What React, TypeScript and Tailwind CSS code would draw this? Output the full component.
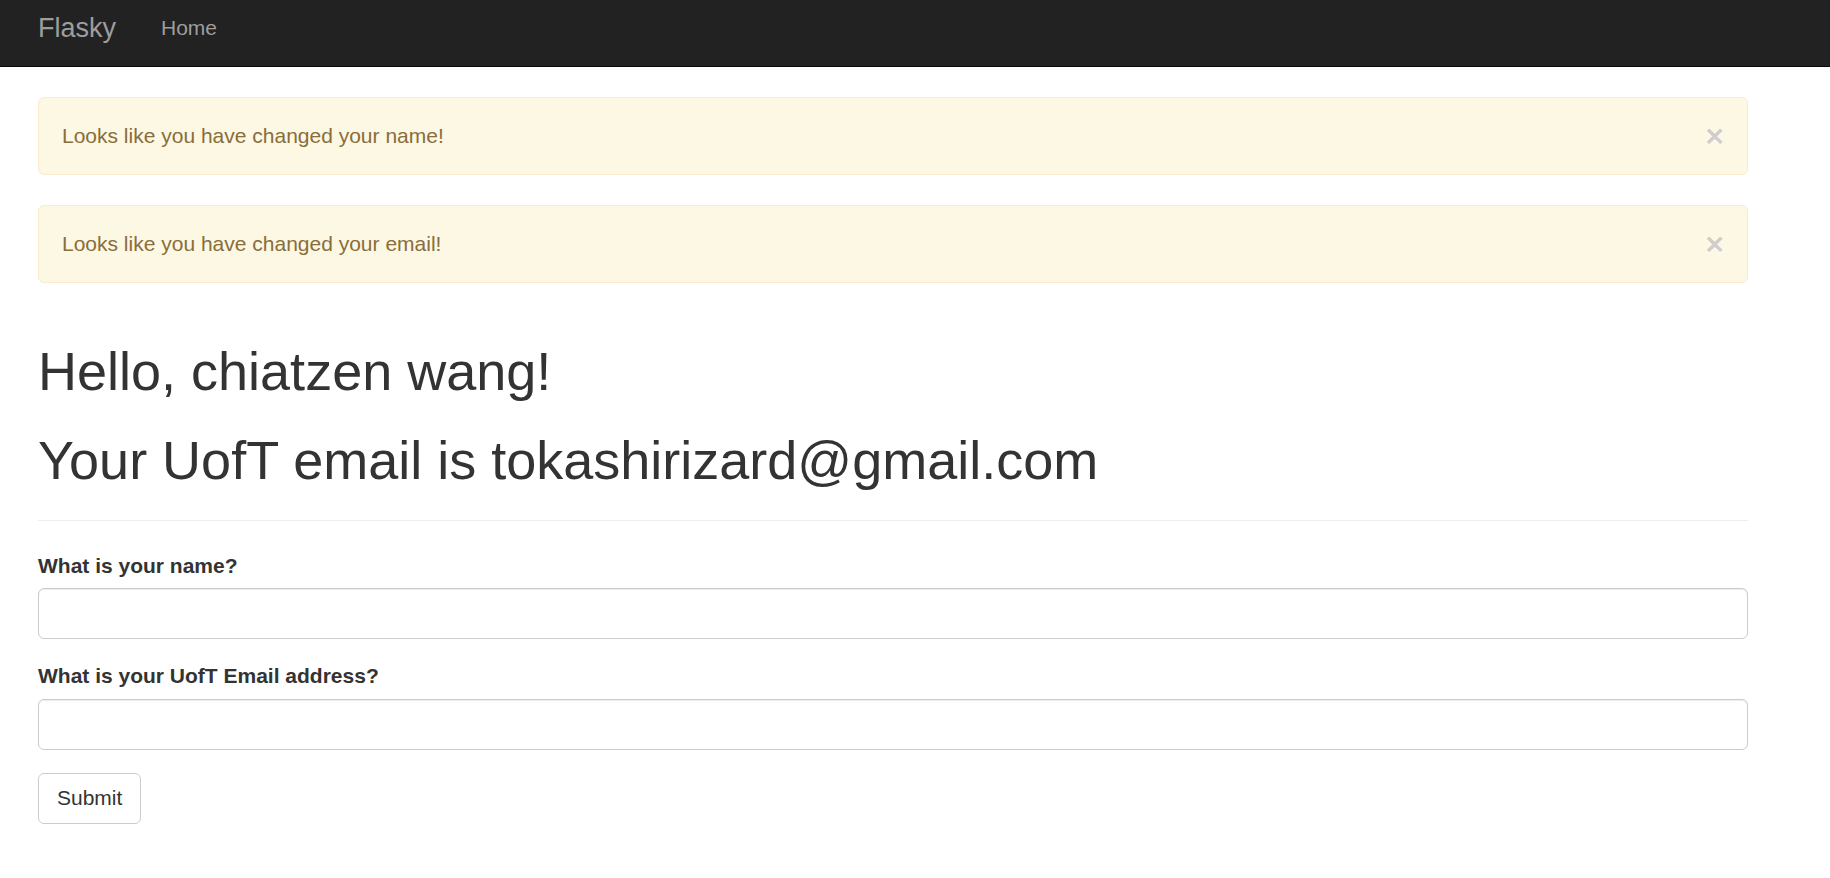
import React from "react";

function Alert({ text }: { text: string }) {
  return (
    <div className="flex items-center justify-between h-[78px] pl-[23px] pr-[23px] bg-[#fcf8e3] border border-[#faebcc] rounded-[6px] text-[#8a6d3b] text-[21px] leading-[30px]">
      <span>{text}</span>
      <button
        type="button"
        className="text-[32px] leading-none font-bold text-black/20 [text-shadow:0_1px_0_#fff]"
      >
        ×
      </button>
    </div>
  );
}

export default function App() {
  return (
    <div
      className="min-h-screen bg-white text-[#333] text-[21px] leading-[30px]"
      style={{ fontFamily: '"Liberation Sans", Arial, Helvetica, sans-serif' }}
    >
      <nav className="h-[67px] bg-[#222] border-b border-[#080808]">
        <div className="flex pl-[38px] pt-[13px]">
          <a className="text-[27px] leading-[30px] text-[#9d9d9d]">Flasky</a>
          <a className="ml-[45px] text-[21px] leading-[30px] text-[#9d9d9d]">Home</a>
        </div>
      </nav>

      <div className="w-[1748px] pl-[38px] pt-[30px]">
        <div className="flex flex-col gap-[30px]">
          <Alert text="Looks like you have changed your name!" />
          <Alert text="Looks like you have changed your email!" />
        </div>

        <div className="mt-[59px] pb-[29px] border-b border-[#eee] mb-[30px]">
          <h1 className="text-[54px] leading-[59.4px] font-medium">Hello, chiatzen wang!</h1>
          <h1 className="mt-[30px] text-[54px] leading-[59.4px] font-medium">
            Your UofT email is tokashirizard@gmail.com
          </h1>
        </div>

        <form onSubmit={(e) => e.preventDefault()}>
          <div className="mb-[22px]">
            <label className="block font-bold leading-[30px] mb-[7.5px]">What is your name?</label>
            <input
              type="text"
              className="block w-full h-[51px] px-[18px] border border-[#ccc] rounded-[6px] bg-white shadow-[inset_0_1px_1px_rgba(0,0,0,0.075)] outline-none"
            />
          </div>
          <div className="mb-[23px]">
            <label className="block font-bold leading-[30px] mb-[7.5px]">What is your UofT Email address?</label>
            <input
              type="text"
              className="block w-full h-[51px] px-[18px] border border-[#ccc] rounded-[6px] bg-white shadow-[inset_0_1px_1px_rgba(0,0,0,0.075)] outline-none"
            />
          </div>
          <button
            type="submit"
            className="h-[51px] px-[18px] border border-[#ccc] rounded-[6px] bg-white text-[#333] text-[21px] leading-[30px]"
          >
            Submit
          </button>
        </form>
      </div>
    </div>
  );
}
